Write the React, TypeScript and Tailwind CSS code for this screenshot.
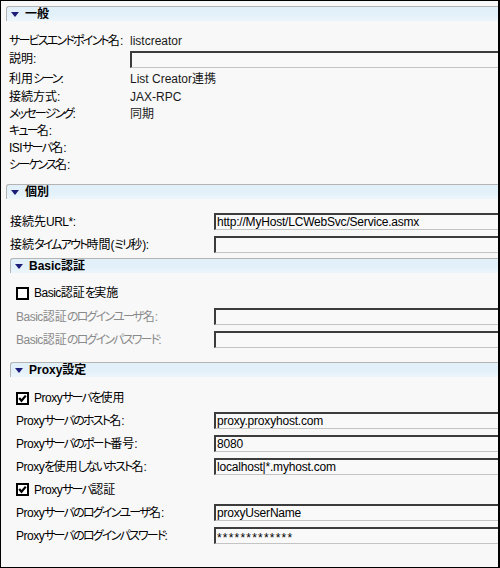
import React from "react";

const font = "[font-family:'Liberation_Sans','Noto_Sans_CJK_JP',sans-serif] [font-feature-settings:'palt']";
const label = "shrink-0 whitespace-nowrap text-[12px] leading-none";

// kana in the original bitmap font are narrower than Noto's, so tighten them per run
function T({ text }: { text: string }) {
  const runs = text.match(/[\u3040-\u30ff]+|[\x00-\x7f]+|[^\u3040-\u30ff\x00-\x7f]+/g) || [];
  return (
    <>
      {runs.map((r, i) => {
        const cls = /[\u3040-\u30ff]/.test(r)
          ? "tracking-[-1.8px]"
          : /[\x00-\x7f]/.test(r)
          ? "tracking-[-0.5px]"
          : "tracking-normal";
        return (
          <span key={i} className={cls}>
            {r}
          </span>
        );
      })}
    </>
  );
}

function Header({ title, indent }: { title: string; indent?: boolean }) {
  return (
    <div
      className={`${indent ? "ml-[9px]" : "ml-[5px]"} h-[15px] border-t border-l border-[#b4b4b4] rounded-tl-[3px] bg-gradient-to-b from-[#e2f0f9] via-[#e2f0f9] to-[#ecf5fb] flex items-center`}
    >
      <svg width="8" height="5" viewBox="0 0 8 5" className="ml-[4px] mr-[6px]">
        <polygon points="0,0 8,0 4,5" fill="#1c1c78" />
      </svg>
      <span className="text-[12px] font-bold leading-none text-black">{title}</span>
    </div>
  );
}

function Input({ value, secret }: { value?: string; secret?: boolean }) {
  return (
    <div className="flex-1 h-[17px] border-t-2 border-l-2 border-t-[#3c3c3c] border-l-[#3c3c3c] border-b border-b-[#c4c4c4] bg-[#f9f9f9] flex items-center pl-[1px] text-[12px] leading-none tracking-[-0.2px] text-black whitespace-nowrap overflow-hidden">
      {secret ? <span className="tracking-[1.2px] pt-[3px]">{value}</span> : value}
    </div>
  );
}

function InputRow({ text, value, indent, disabled, secret }: { text: string; value?: string; indent?: boolean; disabled?: boolean; secret?: boolean }) {
  return (
    <div className={`h-[23px] flex items-center ${indent ? "pl-[15px]" : "pl-[9px]"}`}>
      <span className={`${label} ${indent ? "w-[198px]" : "w-[204px]"} ${disabled ? "text-[#8a8a8a]" : "text-black"}`}>
        <T text={text} />
      </span>
      <Input value={value} secret={secret} />
    </div>
  );
}

function Check({ text, checked, h }: { text: string; checked?: boolean; h: string }) {
  return (
    <div className={`${h} flex items-center pl-[15px]`}>
      <svg width="13" height="13" viewBox="0 0 13 13" className="mr-[5px]">
        <rect x="1" y="1" width="11" height="11" fill="#ffffff" stroke="#000000" strokeWidth="2" />
        {checked && <polyline points="3.2,6 5.5,8.8 9.8,3.6" fill="none" stroke="#000000" strokeWidth="2.2" />}
      </svg>
      <span className={`${label} text-black`}>
        <T text={text} />
      </span>
    </div>
  );
}

function InfoRow({ text, value, h }: { text: string; value?: string; h: string }) {
  return (
    <div className={`${h} flex items-center pl-[8px]`}>
      <span className={`${label} w-[121px] text-black`}>
        <T text={text} />
      </span>
      <span className="text-[12px] leading-none text-[#1a1a1a] whitespace-nowrap">{value}</span>
    </div>
  );
}

export default function App() {
  return (
    <div className={`w-[500px] h-[568px] border border-black border-r-2 bg-[#f8f8f8] overflow-hidden pt-[5px] ${font}`}>
      <Header title="一般" />
      <div className="pt-[11px]">
        <InfoRow h="h-[17px]" text="サービスエンドポイント名:" value="listcreator" />
        <div className="h-[20px] flex items-center pl-[8px]">
          <span className={`${label} w-[121px] text-black`}>
            <T text="説明:" />
          </span>
          <Input />
        </div>
        <InfoRow h="h-[19px]" text="利用シーン:" value="List Creator連携" />
        <InfoRow h="h-[17px]" text="接続方式:" value="JAX-RPC" />
        <InfoRow h="h-[17px]" text="メッセージング:" value="同期" />
        <InfoRow h="h-[17px]" text="キュー名:" />
        <InfoRow h="h-[17px]" text="ISIサーバ名:" />
        <InfoRow h="h-[17px]" text="シーケンス名:" />
      </div>

      <div className="mt-[11px]">
        <Header title="個別" />
      </div>
      <div className="pt-[11px]">
        <InputRow text="接続先URL*:" value="http://MyHost/LCWebSvc/Service.asmx" />
        <InputRow text="接続タイムアウト時間(ミリ秒):" />
      </div>

      <div className="mt-[2px]">
        <Header title="Basic認証" indent />
      </div>
      <div className="pt-[8px]">
        <Check h="h-[24px]" text="Basic認証を実施" />
        <InputRow indent disabled text="Basic認証のログインユーザ名:" />
        <InputRow indent disabled text="Basic認証のログインパスワード:" />
      </div>

      <div className="mt-[11px]">
        <Header title="Proxy設定" indent />
      </div>
      <div className="pt-[10px]">
        <Check h="h-[22px]" text="Proxyサーバを使用" checked />
        <InputRow indent text="Proxyサーバのホスト名:" value="proxy.proxyhost.com" />
        <InputRow indent text="Proxyサーバのポート番号:" value="8080" />
        <InputRow indent text="Proxyを使用しないホスト名:" value="localhost|*.myhost.com" />
        <Check h="h-[23px]" text="Proxyサーバ認証" checked />
        <InputRow indent text="Proxyサーバのログインユーザ名:" value="proxyUserName" />
        <InputRow indent secret text="Proxyサーバのログインパスワード:" value="*************" />
      </div>
    </div>
  );
}
